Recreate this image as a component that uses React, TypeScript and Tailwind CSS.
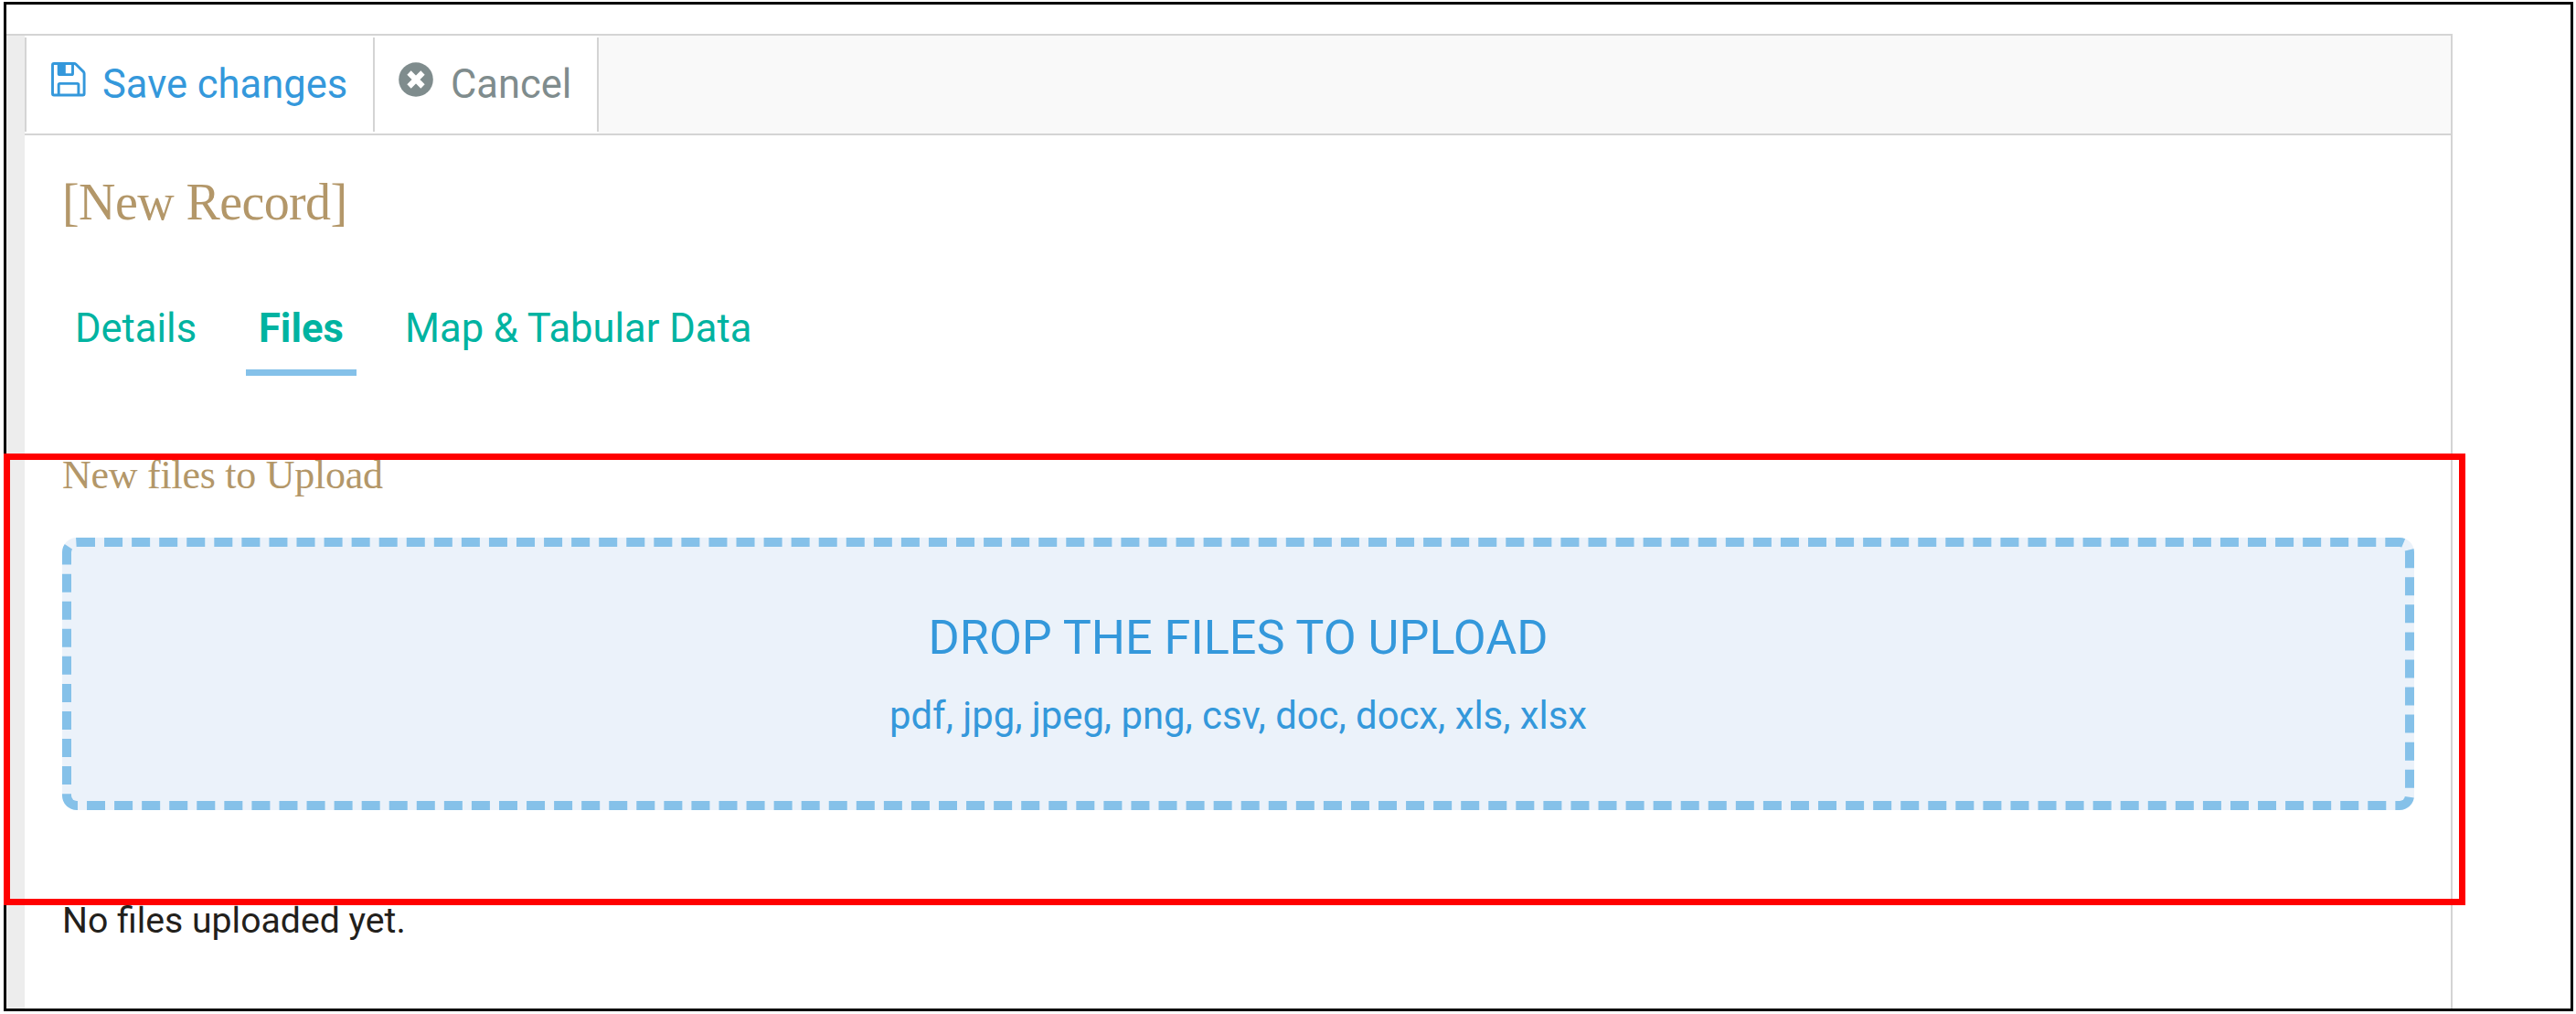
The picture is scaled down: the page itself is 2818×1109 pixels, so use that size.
const line = 'border-[#d4d4d4]';

function SaveIcon() {
  return (
    <svg viewBox="0 0 38 38" className="h-[38px] w-[38px] shrink-0" fill="none" stroke="currentColor" strokeWidth="2.9">
      <path d="M3 1.5H25Q26.2 1.5 27 2.3L35.2 10.4Q36.1 11.3 36.1 12.6V34.4Q36.1 36 34.6 36H3Q1.5 36 1.5 34.4V3Q1.5 1.5 3 1.5Z" />
      <path d="M8.2 1.5V12.4Q8.2 13.6 9.4 13.6H22.3Q23.5 13.6 23.5 12.4V1.5" />
      <path d="M8.2 36V24.6Q8.2 23.4 9.4 23.4H28.7Q29.9 23.4 29.9 24.6V36" />
      <path d="M8 1.5H15.8V13.6H8Z" fill="currentColor" stroke="none" />
    </svg>
  );
}

function CancelIcon() {
  return (
    <svg viewBox="0 0 38 38" className="h-[38px] w-[38px] shrink-0">
      <circle cx="19" cy="19" r="18.8" fill="currentColor" />
      <path d="M13.7 13.7L24.3 24.3M24.3 13.7L13.7 24.3" stroke="white" strokeWidth="6.2" strokeLinecap="square" />
    </svg>
  );
}

export default function App() {
  return (
    <div className="h-[1109px] w-[2818px] overflow-hidden bg-white pt-[2px] pl-[4px] font-['Roboto',sans-serif]">
      <div className="relative flex h-[1104px] w-[2811px] border-[3px] border-black pt-[32px]">
        <div className={`flex w-[2676px] flex-col border-t-2 border-r-2 ${line}`}>
          <div className="flex min-h-0 flex-1">
            <div className="w-[20px] shrink-0 bg-[#ededed]" />
            <main className="min-w-0 flex-1">
              <div className={`flex h-[109px] items-start border-b-2 bg-[#f9f9f9] ${line}`}>
                <div className="flex h-[107px] bg-white py-[2px]">
                  <button className={`flex w-[383px] items-start border-x-2 pt-[27px] pl-[27px] text-[#3498db] ${line}`}>
                    <SaveIcon />
                    <span className="ml-[18px] text-[43.5px] leading-[50px] whitespace-nowrap">Save changes</span>
                  </button>
                  <button className={`flex w-[245px] items-start border-r-2 pt-[27px] pl-[26px] text-[#7f8c8d] ${line}`}>
                    <CancelIcon />
                    <span className="ml-[19px] text-[43.5px] leading-[50px] whitespace-nowrap">Cancel</span>
                  </button>
                </div>
              </div>
              <div className="pl-[41px]">
                <h1 className="mt-[43px] h-[60px] font-['Liberation_Serif',serif] text-[56px] leading-[60px] tracking-[-0.6px] whitespace-nowrap text-[#b39769]">[New Record]</h1>
                <nav className="mt-[75px] flex h-[85px] text-[43.5px] leading-[67px] whitespace-nowrap text-[#00b3a1]">
                  <span className="w-[201px] pl-[14px]">Details</span>
                  <span className="w-[121px] border-b-[7px] border-[#85c1e9] pl-[14px] font-bold">Files</span>
                  <span className="pl-[53px]">Map &amp; Tabular Data</span>
                </nav>
                <h2 className="mt-[82px] h-[54px] font-['Liberation_Serif',serif] text-[44px] leading-[54px] tracking-[-0.25px] whitespace-nowrap text-[#b39769]">New files to Upload</h2>
                <div className="mt-[41px] flex h-[298px] w-[2573px] flex-col items-center rounded-[16px] border-[10px] border-dashed border-[#85c1e9] bg-[#ebf2fa] pt-[70px] text-[#3498db]">
                  <div className="text-[52.2px] leading-[60px]">DROP THE FILES TO UPLOAD</div>
                  <div className="mt-[31px] text-[41.8px] leading-[48px]">pdf, jpg, jpeg, png, csv, doc, docx, xls, xlsx</div>
                </div>
                <p className="mt-[97px] text-[39.2px] leading-[48px] text-[#22201b]">No files uploaded yet.</p>
              </div>
            </main>
          </div>
        </div>
        <div className="pointer-events-none absolute top-[491px] left-[-3px] h-[494px] w-[2693px] border-[7px] border-[#ff0000]" />
      </div>
    </div>
  );
}
